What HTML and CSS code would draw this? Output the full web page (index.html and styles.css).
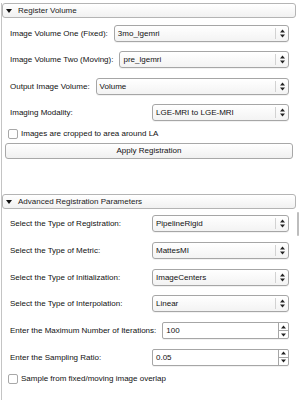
FILE: index.html
```html
<html>
<head>
    <link rel="stylesheet" href="styles.css">
</head>
<body>
    <div class="panel">
        <div class="section">
            <div class="section-head"><span class="caret"></span>Register Volume</div>
            <div class="section-body">
                <div class="row">
                    <span class="label">Image Volume One (Fixed):</span>
                    <div class="combo"><span class="value">3mo_lgemri</span><span class="arrows"><svg width="5" height="9" viewBox="0 0 5 9"><polygon points="0,3.6 2.5,0.6 5,3.6"/><polygon points="0,5.4 2.5,8.4 5,5.4"/></svg></span></div>
                </div>
                <div class="row">
                    <span class="label">Image Volume Two (Moving):</span>
                    <div class="combo"><span class="value">pre_lgemri</span><span class="arrows"><svg width="5" height="9" viewBox="0 0 5 9"><polygon points="0,3.6 2.5,0.6 5,3.6"/><polygon points="0,5.4 2.5,8.4 5,5.4"/></svg></span></div>
                </div>
                <div class="row">
                    <span class="label">Output Image Volume:</span>
                    <div class="combo"><span class="value">Volume</span><span class="arrows"><svg width="5" height="9" viewBox="0 0 5 9"><polygon points="0,3.6 2.5,0.6 5,3.6"/><polygon points="0,5.4 2.5,8.4 5,5.4"/></svg></span></div>
                </div>
                <div class="row form">
                    <span class="label">Imaging Modality:</span>
                    <div class="combo"><span class="value">LGE-MRI to LGE-MRI</span><span class="arrows"><svg width="5" height="9" viewBox="0 0 5 9"><polygon points="0,3.6 2.5,0.6 5,3.6"/><polygon points="0,5.4 2.5,8.4 5,5.4"/></svg></span></div>
                </div>
                <div class="check"><span class="box"></span>Images are cropped to area around LA</div>
                <div class="button">Apply Registration</div>
            </div>
        </div>

        <div class="section advanced">
            <div class="section-head"><span class="caret"></span>Advanced Registration Parameters</div>
            <div class="section-body">
                <div class="row form">
                    <span class="label">Select the Type of Registration:</span>
                    <div class="combo"><span class="value">PipelineRigid</span><span class="arrows"><svg width="5" height="9" viewBox="0 0 5 9"><polygon points="0,3.6 2.5,0.6 5,3.6"/><polygon points="0,5.4 2.5,8.4 5,5.4"/></svg></span></div>
                </div>
                <div class="row form">
                    <span class="label">Select the Type of Metric:</span>
                    <div class="combo"><span class="value">MattesMI</span><span class="arrows"><svg width="5" height="9" viewBox="0 0 5 9"><polygon points="0,3.6 2.5,0.6 5,3.6"/><polygon points="0,5.4 2.5,8.4 5,5.4"/></svg></span></div>
                </div>
                <div class="row form">
                    <span class="label">Select the Type of Initialization:</span>
                    <div class="combo"><span class="value">ImageCenters</span><span class="arrows"><svg width="5" height="9" viewBox="0 0 5 9"><polygon points="0,3.6 2.5,0.6 5,3.6"/><polygon points="0,5.4 2.5,8.4 5,5.4"/></svg></span></div>
                </div>
                <div class="row form">
                    <span class="label">Select the Type of Interpolation:</span>
                    <div class="combo"><span class="value">Linear</span><span class="arrows"><svg width="5" height="9" viewBox="0 0 5 9"><polygon points="0,3.6 2.5,0.6 5,3.6"/><polygon points="0,5.4 2.5,8.4 5,5.4"/></svg></span></div>
                </div>
                <div class="row form">
                    <span class="label">Enter the Maximum Number of Iterations:</span>
                    <div class="spin"><span class="value">100</span><span class="steps"><span class="step"><svg width="5" height="4" viewBox="0 0 5 4"><polygon points="0,3.5 2.5,0.5 5,3.5"/></svg></span><span class="step"><svg width="5" height="4" viewBox="0 0 5 4"><polygon points="0,0.5 2.5,3.5 5,0.5"/></svg></span></span></div>
                </div>
                <div class="row form">
                    <span class="label">Enter the Sampling Ratio:</span>
                    <div class="spin"><span class="value">0.05</span><span class="steps"><span class="step"><svg width="5" height="4" viewBox="0 0 5 4"><polygon points="0,3.5 2.5,0.5 5,3.5"/></svg></span><span class="step"><svg width="5" height="4" viewBox="0 0 5 4"><polygon points="0,0.5 2.5,3.5 5,0.5"/></svg></span></span></div>
                </div>
                <div class="check"><span class="box"></span>Sample from fixed/moving image overlap</div>
            </div>
        </div>

        <div class="scroll-thumb"></div>
    </div>
</body>
</html>
```

FILE: styles.css
```css
        html, body {
            margin: 0;
            padding: 0;
            background-color: #ffffff;
        }
        body {
            width: 300px;
            height: 400px;
            overflow: hidden;
            font-family: 'Liberation Sans', Arial, sans-serif;
            font-size: 8px;
            color: #111;
        }
        .panel {
            position: relative;
            margin-left: 1px;
            height: 400px;
            border-left: 1px solid #c4c4c4;
        }
        .section-head {
            display: flex;
            align-items: center;
            height: 13px;
            margin: 3px 4px 0 0;
            padding-left: 3px;
            border: 1px solid #b4b4b4;
            border-radius: 3px;
            background: linear-gradient(#ffffff, #f1f1f1);
            color: #1a1a1a;
        }
        .caret {
            width: 0;
            height: 0;
            margin-right: 6px;
            border-left: 3px solid transparent;
            border-right: 3px solid transparent;
            border-top: 4px solid #111;
        }
        .section-body {
            display: flex;
            flex-direction: column;
            gap: 9.5px;
            padding: 6.5px 8px 0 8px;
        }
        .advanced {
            margin-top: 35.5px;
        }
        .advanced .section-body {
            gap: 9.8px;
            padding-top: 6px;
        }
        .row {
            display: flex;
            align-items: center;
            height: 17px;
            margin-right: 3px;
        }
        .label {
            white-space: nowrap;
            margin-right: 6px;
        }
        .form .label {
            min-width: 136px;
        }
        .combo, .spin {
            flex: 1;
            display: flex;
            align-items: center;
            height: 15px;
            border: 1px solid #a6a6a6;
            border-radius: 3px;
            background: linear-gradient(#ffffff, #f3f3f3);
            box-shadow: 0 1px 0 rgba(0, 0, 0, 0.05);
        }
        .spin {
            border-radius: 2px;
            background: #fff;
        }
        .value {
            flex: 1;
            padding-left: 3px;
            white-space: nowrap;
        }
        .arrows {
            display: flex;
            align-items: center;
            justify-content: center;
            width: 12px;
            height: 11px;
            border-left: 1px solid #d2d2d2;
        }
        .arrows svg, .step svg {
            fill: #222;
        }
        .steps {
            display: flex;
            flex-direction: column;
            width: 9px;
            height: 15px;
            border-left: 1px solid #a6a6a6;
        }
        .step {
            flex: 1;
            display: flex;
            align-items: center;
            justify-content: center;
        }
        .step + .step {
            border-top: 1px solid #a6a6a6;
        }
        .check {
            display: flex;
            align-items: center;
            height: 12px;
            margin: -3px 0 0 -2px;
            white-space: nowrap;
        }
        .box {
            width: 8px;
            height: 8px;
            margin-right: 3px;
            border: 1px solid #a8a8a8;
            border-radius: 2px;
            background: #fff;
        }
        .button {
            display: flex;
            align-items: center;
            justify-content: center;
            height: 14px;
            margin: -6.5px -1px 0 -5px;
            border: 1px solid #a8a8a8;
            border-radius: 3px;
            background: linear-gradient(#ffffff, #f0f0f0);
        }
        .scroll-thumb {
            position: absolute;
            top: 209px;
            right: 1px;
            width: 2px;
            height: 24px;
            border-radius: 1px;
            background-color: #bdbdbd;
        }
```
